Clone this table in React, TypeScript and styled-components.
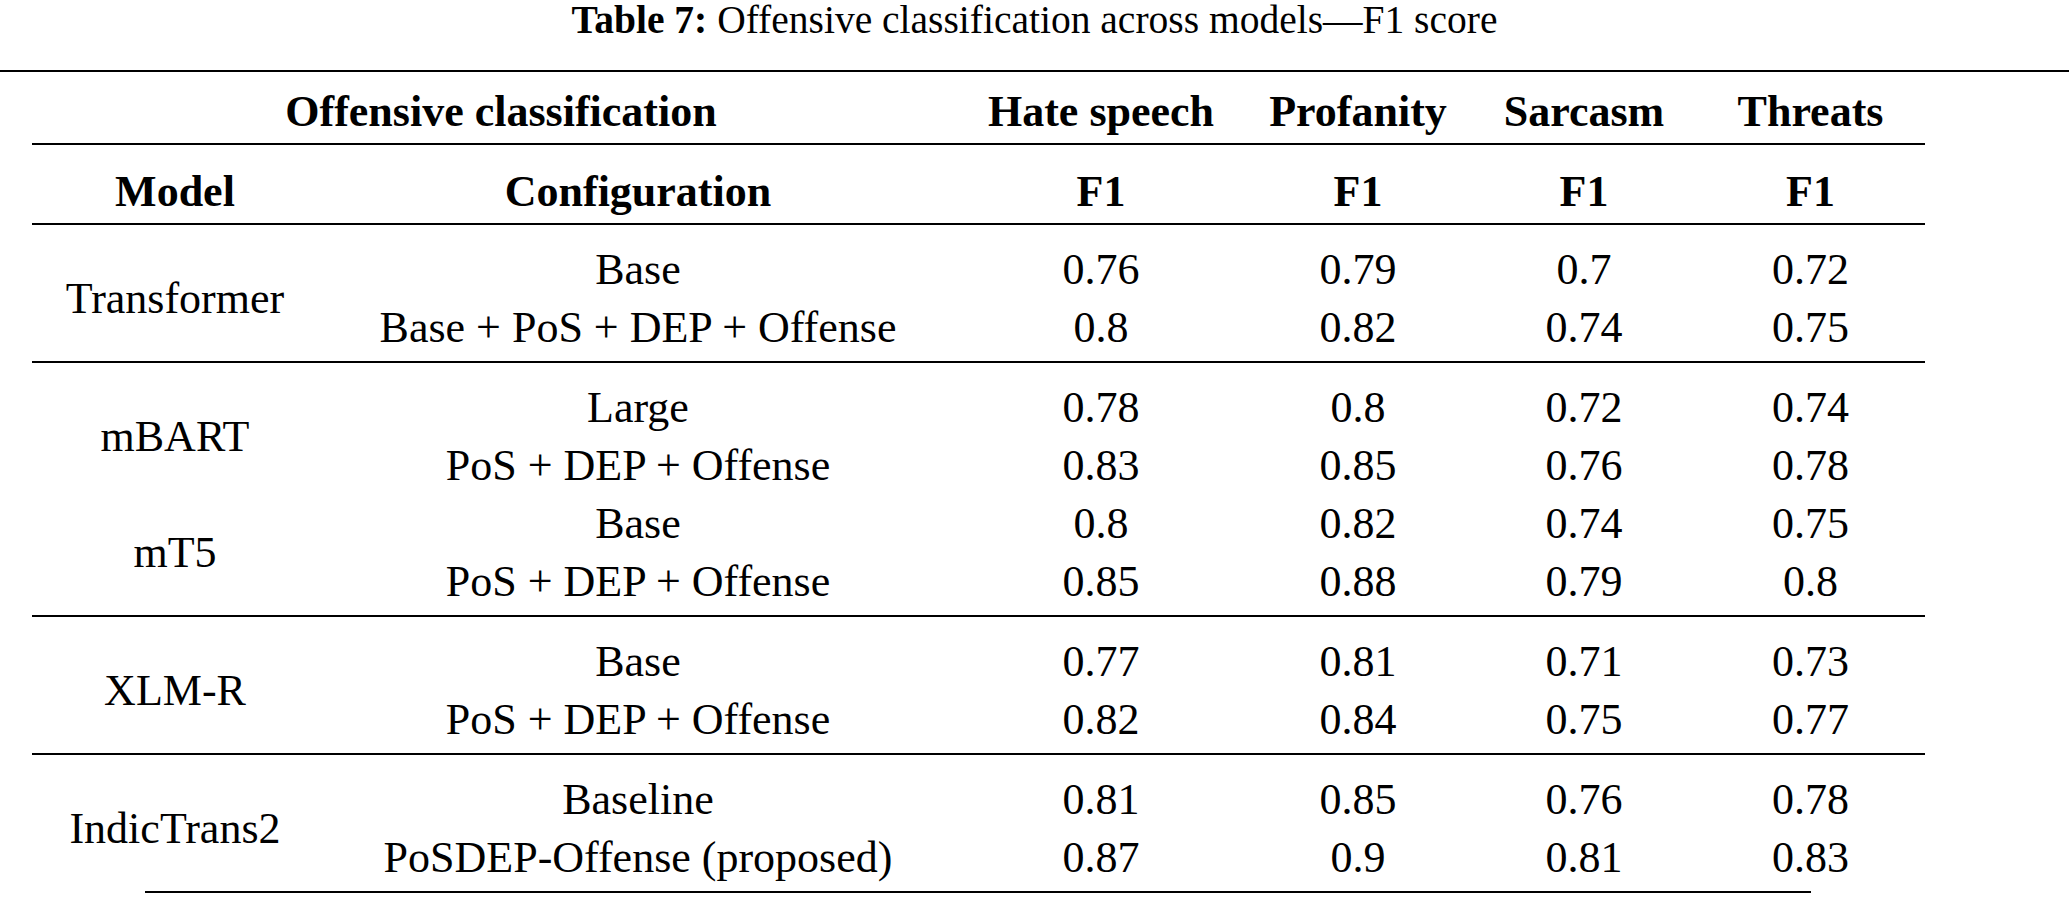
import styled, { createGlobalStyle, css } from 'styled-components';

const COLUMNS = '286px 640px 286px 228px 224px 229px';

const serif = css`
  font-family: "Liberation Serif", serif;
  color: #000000;
`;

const GlobalStyle = createGlobalStyle`
  html, body {
    margin: 0;
    padding: 0;
    background: #ffffff;
  }
`;

const Page = styled.div`
  width: 2069px;
  ${serif};
`;

const Caption = styled.div`
  height: 40px;
  margin-bottom: 30px;
  ${serif};
  font-size: 39.5px;
  line-height: 40px;
  text-align: center;
  white-space: nowrap;
`;

const CaptionLabel = styled.strong`
  ${serif};
  font-weight: 700;
`;

const TopRule = styled.div`
  height: 2px;
  background: #000000;
`;

const Table = styled.div`
  width: 1893px;
  margin-left: 32px;
  font-size: 44px;
  line-height: 58px;
`;

const HeadRow = styled.div<{ $ruled?: boolean }>`
  display: grid;
  grid-template-columns: ${COLUMNS};
  text-align: center;
  padding-top: ${p => (p.$ruled ? '18px' : '11px')};
  padding-bottom: ${p => (p.$ruled ? '2px' : '0')};
  border-bottom: ${p => (p.$ruled ? '2px solid #000000' : 'none')};
`;

const GroupHead = styled.div<{ $span: number; $trim?: boolean }>`
  grid-column: span ${p => p.$span};
  padding-left: ${p => (p.$trim ? '12px' : '0')};
  padding-bottom: 2px;
  border-bottom: 2px solid #000000;
  ${serif};
  font-weight: 700;
  white-space: nowrap;
`;

const HeadCell = styled.div`
  ${serif};
  font-weight: 700;
  white-space: nowrap;
`;

const Group = styled.div<{ $last?: boolean }>`
  padding: 16px 0 4px;
  border-bottom: ${p => (p.$last ? 'none' : '2px solid #000000')};
`;

const ModelBlock = styled.div`
  display: grid;
  grid-template-columns: ${COLUMNS};
  grid-auto-rows: 58px;
  text-align: center;
`;

const ModelName = styled.div<{ $rows: number }>`
  grid-column: 1;
  grid-row: span ${p => p.$rows};
  align-self: center;
  ${serif};
  white-space: nowrap;
`;

const Cell = styled.div`
  ${serif};
  white-space: nowrap;
`;

const BottomRule = styled.div`
  width: 1666px;
  height: 2px;
  margin-left: 145px;
  background: #000000;
`;

type Row = { config: string; scores: string[] };
type Model = { name: string; rows: Row[] };

const groups: Model[][] = [
  [
    {
      name: 'Transformer',
      rows: [
        { config: 'Base', scores: ['0.76', '0.79', '0.7', '0.72'] },
        { config: 'Base + PoS + DEP + Offense', scores: ['0.8', '0.82', '0.74', '0.75'] },
      ],
    },
  ],
  [
    {
      name: 'mBART',
      rows: [
        { config: 'Large', scores: ['0.78', '0.8', '0.72', '0.74'] },
        { config: 'PoS + DEP + Offense', scores: ['0.83', '0.85', '0.76', '0.78'] },
      ],
    },
    {
      name: 'mT5',
      rows: [
        { config: 'Base', scores: ['0.8', '0.82', '0.74', '0.75'] },
        { config: 'PoS + DEP + Offense', scores: ['0.85', '0.88', '0.79', '0.8'] },
      ],
    },
  ],
  [
    {
      name: 'XLM-R',
      rows: [
        { config: 'Base', scores: ['0.77', '0.81', '0.71', '0.73'] },
        { config: 'PoS + DEP + Offense', scores: ['0.82', '0.84', '0.75', '0.77'] },
      ],
    },
  ],
  [
    {
      name: 'IndicTrans2',
      rows: [
        { config: 'Baseline', scores: ['0.81', '0.85', '0.76', '0.78'] },
        { config: 'PoSDEP-Offense (proposed)', scores: ['0.87', '0.9', '0.81', '0.83'] },
      ],
    },
  ],
];

const categories = ['Hate speech', 'Profanity', 'Sarcasm', 'Threats'];

const App = () => {
  return (
    <Page>
      <GlobalStyle />
      <Caption>
        <CaptionLabel>Table 7:</CaptionLabel> Offensive classification across models—F1 score
      </Caption>
      <TopRule />
      <Table>
        <HeadRow>
          <GroupHead $span={2} $trim>
            Offensive classification
          </GroupHead>
          {categories.map(c => (
            <GroupHead key={c} $span={1}>
              {c}
            </GroupHead>
          ))}
        </HeadRow>
        <HeadRow $ruled>
          <HeadCell>Model</HeadCell>
          <HeadCell>Configuration</HeadCell>
          {categories.map(c => (
            <HeadCell key={c}>F1</HeadCell>
          ))}
        </HeadRow>
        {groups.map((models, gi) => (
          <Group key={gi} $last={gi === groups.length - 1}>
            {models.map(m => (
              <ModelBlock key={m.name}>
                <ModelName $rows={m.rows.length}>{m.name}</ModelName>
                {m.rows.map(r => [
                  <Cell key={r.config}>{r.config}</Cell>,
                  ...r.scores.map((s, si) => <Cell key={r.config + si}>{s}</Cell>),
                ])}
              </ModelBlock>
            ))}
          </Group>
        ))}
      </Table>
      <BottomRule />
    </Page>
  );
};

export default App;
